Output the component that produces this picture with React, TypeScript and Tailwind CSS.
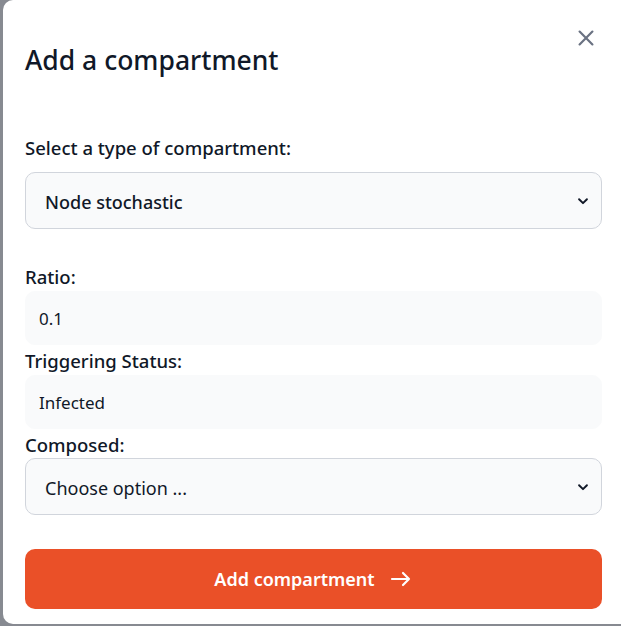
import type { ReactNode } from "react";

function Chevron() {
  return (
    <svg className="pointer-events-none absolute right-[12px] top-1/2 h-[14px] w-[14px] -translate-y-1/2" viewBox="0 0 16 16" fill="none">
      <path d="M3.5 6l4.5 4.5L12.5 6" stroke="#111827" strokeWidth="2.2" strokeLinecap="round" strokeLinejoin="round" />
    </svg>
  );
}

function Label({ children }: { children: ReactNode }) {
  return <label className="block h-6 text-[18.5px] leading-6 font-medium text-gray-900">{children}</label>;
}

function SelectBox({ value, bold }: { value: string; bold?: boolean }) {
  return (
    <div className="relative">
      <select
        defaultValue={value}
        className={
          bold
            ? "block h-[57px] w-full appearance-none rounded-[10px] border border-gray-300 bg-gray-50 pt-[3px] pl-[19px] pr-10 text-[18px] font-medium text-gray-900 outline-none"
            : "block h-[57px] w-full appearance-none rounded-[10px] border border-gray-300 bg-gray-50 pt-[3px] pl-[19px] pr-10 text-[18px] text-gray-900 outline-none"
        }
      >
        <option>{value}</option>
      </select>
      <Chevron />
    </div>
  );
}

function TextInput({ value }: { value: string }) {
  return (
    <input
      defaultValue={value}
      className="block h-[54px] w-full rounded-[10px] border border-gray-50 bg-gray-50 px-[13px] text-[17px] text-gray-900 outline-none"
    />
  );
}

export default function App() {
  return (
    <div className="flex h-[626px] w-[621px] overflow-hidden bg-[#878a91] font-['Noto_Sans',sans-serif]">
      <div className="ml-[3px] h-[624px] flex-1 rounded-l-[10px] bg-white pr-[19px] pl-[22px]">
        <div className="flex items-start justify-between pt-[44px]">
          <h2 className="text-[26.5px] leading-8 font-medium text-gray-900">Add a compartment</h2>
          <button className="-mt-[17px] mr-[5px] text-gray-500">
            <svg className="h-[22px] w-[22px]" viewBox="0 0 24 24" fill="none">
              <path d="M5 5l14 14M19 5L5 19" stroke="currentColor" strokeWidth="2.4" strokeLinecap="round" />
            </svg>
          </button>
        </div>

        <div className="mt-[60px]">
          <Label>Select a type of compartment:</Label>
        </div>
        <div className="mt-[12px]">
          <SelectBox value="Node stochastic" bold />
        </div>

        <div className="mt-[36px]">
          <Label>Ratio:</Label>
        </div>
        <div className="mt-[2px]">
          <TextInput value="0.1" />
        </div>

        <div className="mt-[4px]">
          <Label>Triggering Status:</Label>
        </div>
        <div className="mt-[2px]">
          <TextInput value="Infected" />
        </div>

        <div className="mt-[4px]">
          <Label>Composed:</Label>
        </div>
        <div className="mt-[1px]">
          <SelectBox value="Choose option ..." />
        </div>

        <button className="mt-[34px] flex h-[60px] w-full items-center justify-center gap-[14px] rounded-[10px] bg-[#ea5028] text-[18px] font-semibold text-white">
          Add compartment
          <svg className="h-[24px] w-[24px]" viewBox="0 0 24 24" fill="none">
            <path d="M3 12h17M14 6l6 6-6 6" stroke="currentColor" strokeWidth="2.2" strokeLinecap="round" strokeLinejoin="round" />
          </svg>
        </button>
      </div>
    </div>
  );
}
